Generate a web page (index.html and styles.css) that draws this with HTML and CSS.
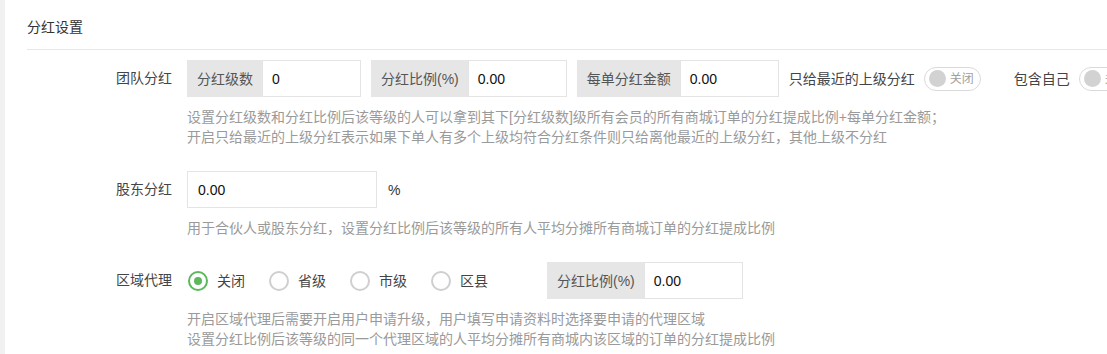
FILE: index.html
```html
<!DOCTYPE html>
<html lang="zh-CN">
<head>
<meta charset="utf-8">
<title>分红设置</title>
<link rel="stylesheet" href="styles.css">
</head>
<body>
<div class="panel">
  <div class="panel-head">分红设置</div>
  <div class="form">
    <div class="row">
      <div class="label">团队分红</div>
      <div class="controls">
        <div class="line">
          <div class="group"><span class="addon">分红级数</span><input class="field" type="text" value="0"></div>
          <div class="group"><span class="addon">分红比例(%)</span><input class="field" type="text" value="0.00"></div>
          <div class="group"><span class="addon">每单分红金额</span><input class="field" type="text" value="0.00"></div>
          <span class="text">只给最近的上级分红</span>
          <span class="switch"><span class="knob"></span><span class="sw-text">关闭</span></span>
          <span class="text">包含自己</span>
          <span class="switch"><span class="knob"></span><span class="sw-text">关闭</span></span>
        </div>
        <div class="help">设置分红级数和分红比例后该等级的人可以拿到其下[分红级数]级所有会员的所有商城订单的分红提成比例+每单分红金额；<br>开启只给最近的上级分红表示如果下单人有多个上级均符合分红条件则只给离他最近的上级分红，其他上级不分红</div>
      </div>
    </div>
    <div class="row">
      <div class="label">股东分红</div>
      <div class="controls">
        <div class="line">
          <input class="field wide" type="text" value="0.00">
          <span class="unit">%</span>
        </div>
        <div class="help">用于合伙人或股东分红，设置分红比例后该等级的所有人平均分摊所有商城订单的分红提成比例</div>
      </div>
    </div>
    <div class="row">
      <div class="label">区域代理</div>
      <div class="controls">
        <div class="line">
          <label class="radio"><span class="circle on"></span>关闭</label>
          <label class="radio"><span class="circle"></span>省级</label>
          <label class="radio"><span class="circle"></span>市级</label>
          <label class="radio"><span class="circle"></span>区县</label>
          <div class="group shift"><span class="addon">分红比例(%)</span><input class="field" type="text" value="0.00"></div>
        </div>
        <div class="help">开启区域代理后需要开启用户申请升级，用户填写申请资料时选择要申请的代理区域<br>设置分红比例后该等级的同一个代理区域的人平均分摊所有商城内该区域的订单的分红提成比例</div>
      </div>
    </div>
  </div>
</div>
</body>
</html>
```

FILE: styles.css
```css
html, body {
  margin: 0;
  height: 100%;
}
body {
  background: #f1f1f1;
  font-family: "Liberation Sans", "Noto Sans CJK SC", sans-serif;
  font-size: 14px;
  line-height: 20px;
  color: #444;
  overflow: hidden;
}
.panel {
  margin-left: 5px;
  height: 100%;
  background: #fff;
  overflow: hidden;
}
.panel-head {
  margin-left: 22px;
  padding: 17px 0 12px;
  border-bottom: 1px solid #e7e7e7;
  color: #333;
}
.form {
  padding-top: 10px;
}
.row {
  display: flex;
  margin-bottom: 24px;
}
.label {
  flex: 0 0 145px;
  margin-left: 22px;
  margin-right: 15px;
  text-align: right;
  height: 37px;
  line-height: 37px;
  color: #444;
}
.controls {
  flex: 1 0 auto;
}
.line {
  display: flex;
  align-items: center;
  height: 37px;
  white-space: nowrap;
}
.group {
  display: flex;
  height: 37px;
  margin-right: 10px;
  flex-shrink: 0;
}
.group.shift {
  margin-left: 36px;
}
.addon {
  display: flex;
  align-items: center;
  padding: 0 9px;
  background: #e6e6e6;
  color: #555;
  border: 1px solid #e6e6e6;
  border-right: 0;
}
.field {
  box-sizing: border-box;
  width: 99px;
  height: 37px;
  padding: 0 9px;
  border: 1px solid #e4e4e4;
  border-radius: 0;
  font-family: "Liberation Sans", "Noto Sans CJK SC", sans-serif;
  font-size: 14px;
  color: #111;
  background: #fff;
  outline: none;
}
.field.wide {
  width: 190px;
  padding-left: 10px;
}
.unit {
  margin-left: 11px;
  color: #333;
}
.text {
  color: #444;
  flex-shrink: 0;
}
.switch {
  flex-shrink: 0;
  box-sizing: border-box;
  width: 57px;
  height: 24px;
  margin: 0 33px 0 9px;
  border: 1px solid #dadada;
  border-radius: 12px;
  display: flex;
  align-items: center;
  padding-left: 4px;
  background: #fff;
}
.knob {
  width: 17px;
  height: 17px;
  border-radius: 50%;
  background: #d2d2d2;
}
.sw-text {
  margin-left: 4px;
  font-size: 12px;
  color: #a0a0a0;
}
.radio {
  display: flex;
  align-items: center;
  margin-right: 23px;
  color: #444;
  flex-shrink: 0;
}
.circle {
  box-sizing: border-box;
  width: 20px;
  height: 20px;
  margin-left: 1px;
  margin-right: 9px;
  border: 2px solid #cfcfcf;
  border-radius: 50%;
  display: flex;
  align-items: center;
  justify-content: center;
}
.circle.on {
  border-color: #5cb85c;
}
.circle.on::after {
  content: "";
  width: 8px;
  height: 8px;
  border-radius: 50%;
  background: #5cb85c;
}
.help {
  margin-top: 10px;
  color: #9a9a9a;
  white-space: nowrap;
}
```
